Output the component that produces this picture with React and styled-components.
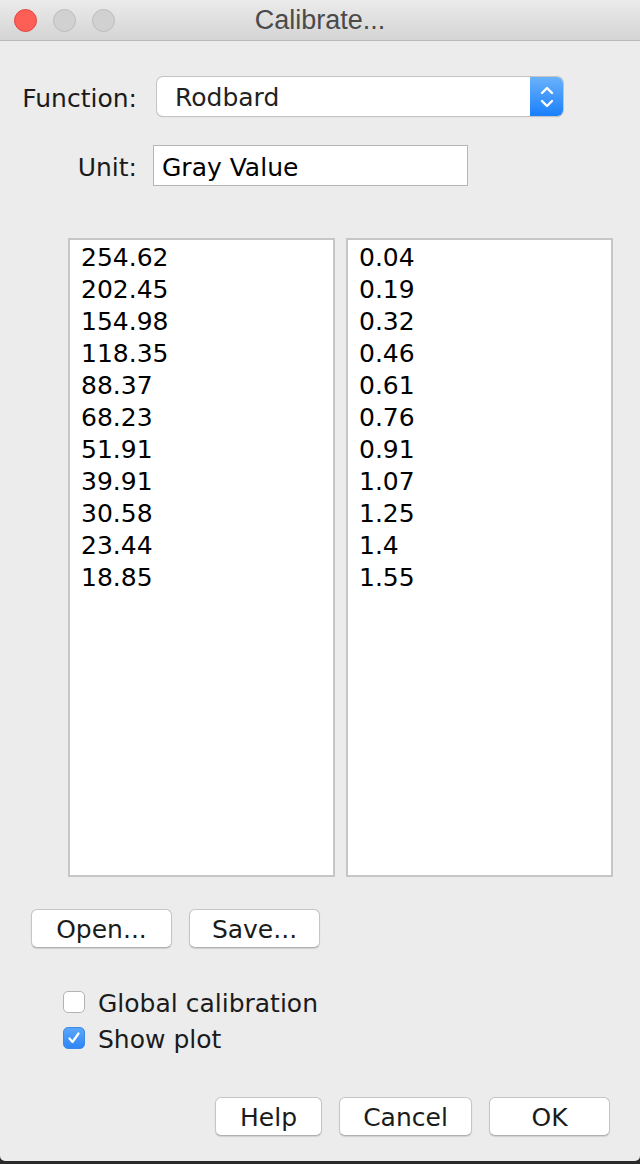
import styled, { createGlobalStyle } from 'styled-components'

const Global = createGlobalStyle`
body {
  margin: 0;
  background: #2b2b2b;
  font-family: 'Lucida Grande', 'DejaVu Sans', 'Noto Sans', sans-serif;
}
`;

const Window = styled.div`
width: 640px;
height: 1161px;
background: #ececec;
border-radius: 0 0 5px 5px;
display: flex;
flex-direction: column;
overflow: hidden;
`;

const TitleBar = styled.div`
height: 40px;
flex-shrink: 0;
border-bottom: 1px solid #b9b9b9;
background: linear-gradient(#ebebeb, #d4d4d4);
display: flex;
align-items: center;
position: relative;
padding-left: 14px;
gap: 16px;
`;

const Light = styled.span`
width: 23px;
height: 23px;
border-radius: 50%;
box-sizing: border-box;
background: ${(p) => (p.red ? '#fd5f57' : '#d1d1d1')};
border: 1px solid ${(p) => (p.red ? '#e2463f' : '#bcbcbc')};
`;

const Title = styled.div`
position: absolute;
left: 0;
right: 0;
text-align: center;
font-family: 'Liberation Sans', Arial, sans-serif;
font-size: 27px;
color: #4a4a4a;
pointer-events: none;
`;

const Body = styled.div`
flex: 1;
display: flex;
flex-direction: column;
font-size: 25px;
`;

const FieldRow = styled.div`
display: flex;
align-items: center;
margin-top: ${(p) => p.top}px;
`;

const Label = styled.div`
width: 137px;
padding-top: 3px;
text-align: right;
color: #1b1b1b;
margin-right: ${(p) => p.gap}px;
`;

const Select = styled.div`
width: 406px;
height: 39px;
box-sizing: border-box;
background: #fff;
border-radius: 6px;
box-shadow: 0 0 0 1px #c4c4c4, 0 1px 1px rgba(0, 0, 0, 0.25);
display: flex;
align-items: center;
overflow: hidden;
`;

const SelectText = styled.div`
flex: 1;
padding: 2px 0 0 18px;
color: #222;
`;

const SelectArrows = styled.div`
width: 33px;
height: 100%;
background: linear-gradient(#6ab2fb, #1a7ffb);
display: flex;
align-items: center;
justify-content: center;
`;

const TextField = styled.div`
width: 315px;
height: 41px;
box-sizing: border-box;
background: #fff;
border: 1px solid #b5b5b5;
display: flex;
align-items: center;
padding: 3px 0 0 8px;
color: #000;
`;

const Lists = styled.div`
display: flex;
gap: 11px;
margin: 52px 0 0 68px;
`;

const ListBox = styled.div`
width: 267px;
height: 639px;
box-sizing: border-box;
background: #fff;
border: 2px solid #c6c6c6;
padding: 2px 0 0 11px;
line-height: 32px;
color: #000;
`;

const ButtonRow = styled.div`
display: flex;
gap: ${(p) => p.gap}px;
margin-top: ${(p) => p.top}px;
padding: 0 ${(p) => p.right || 0}px 0 ${(p) => p.left || 0}px;
justify-content: ${(p) => (p.end ? 'flex-end' : 'flex-start')};
`;

const Button = styled.button`
width: ${(p) => p.w}px;
height: 39px;
background: #fff;
border: 1px solid #c5c5c5;
border-bottom-color: #b0b0b0;
border-radius: 6px;
box-shadow: 0 1px 1px rgba(0, 0, 0, 0.12);
font-family: inherit;
font-size: 25px;
color: #1b1b1b;
padding: 1px 0 0;
`;

const Checks = styled.div`
display: flex;
flex-direction: column;
margin: 37px 0 0 63px;
`;

const CheckRow = styled.div`
display: flex;
align-items: center;
height: 36px;
gap: 13px;
color: #1b1b1b;
`;

const Box = styled.span`
width: 22px;
height: 22px;
box-sizing: border-box;
border-radius: 5px;
margin-top: -3px;
background: ${(p) => (p.checked ? 'linear-gradient(#5aa6f9, #2f86f6)' : '#fff')};
border: 1px solid ${(p) => (p.checked ? '#3a8ae8' : '#b3b3b3')};
display: flex;
align-items: center;
justify-content: center;
`;

const xs = ['254.62', '202.45', '154.98', '118.35', '88.37', '68.23', '51.91', '39.91', '30.58', '23.44', '18.85'];
const ys = ['0.04', '0.19', '0.32', '0.46', '0.61', '0.76', '0.91', '1.07', '1.25', '1.4', '1.55'];

const App = () => {
    return (
        <>
            <Global />
            <Window>
                <TitleBar>
                    <Light red />
                    <Light />
                    <Light />
                    <Title>Calibrate...</Title>
                </TitleBar>
                <Body>
                    <FieldRow top={36}>
                        <Label gap={20}>Function:</Label>
                        <Select>
                            <SelectText>Rodbard</SelectText>
                            <SelectArrows>
                                <svg width="16" height="26" viewBox="0 0 16 26" fill="none" stroke="#fff" strokeWidth="2.4" strokeLinecap="round" strokeLinejoin="round">
                                    <path d="M3 9 L8 4 L13 9" />
                                    <path d="M3 17 L8 22 L13 17" />
                                </svg>
                            </SelectArrows>
                        </Select>
                    </FieldRow>
                    <FieldRow top={29}>
                        <Label gap={16}>Unit:</Label>
                        <TextField>Gray Value</TextField>
                    </FieldRow>
                    <Lists>
                        <ListBox>
                            {xs.map((v) => <div key={v}>{v}</div>)}
                        </ListBox>
                        <ListBox>
                            {ys.map((v) => <div key={v}>{v}</div>)}
                        </ListBox>
                    </Lists>
                    <ButtonRow top={32} gap={17} left={31}>
                        <Button w={141}>Open...</Button>
                        <Button w={131}>Save...</Button>
                    </ButtonRow>
                    <Checks>
                        <CheckRow>
                            <Box />
                            Global calibration
                        </CheckRow>
                        <CheckRow>
                            <Box checked>
                                <svg width="16" height="16" viewBox="0 0 16 16" fill="none" stroke="#fff" strokeWidth="2.2" strokeLinecap="round" strokeLinejoin="round">
                                    <path d="M3.5 8.5 L6.5 12 L12.5 3.5" />
                                </svg>
                            </Box>
                            Show plot
                        </CheckRow>
                    </Checks>
                    <ButtonRow top={40} gap={17} right={30} end>
                        <Button w={107}>Help</Button>
                        <Button w={133}>Cancel</Button>
                        <Button w={121}>OK</Button>
                    </ButtonRow>
                </Body>
            </Window>
        </>
    )
}

export default App
